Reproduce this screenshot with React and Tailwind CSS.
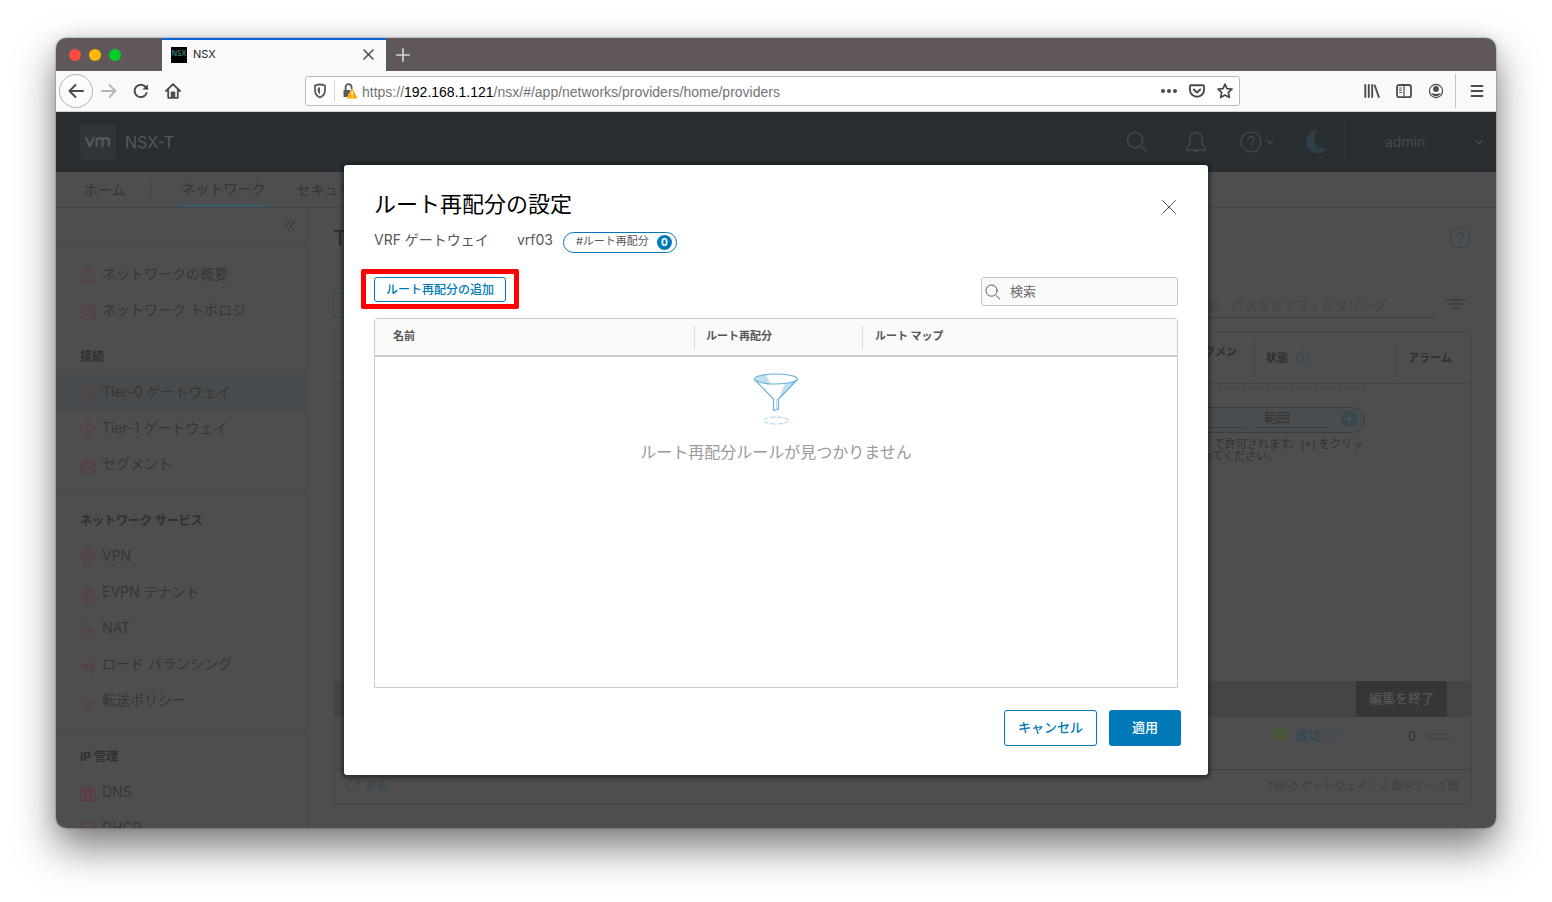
import React from "react";

const Svg = ({ s = 16, vb = "0 0 16 16", w = 1, className = "", children }) => (
  <svg
    width={s}
    height={s}
    viewBox={vb}
    fill="none"
    stroke="currentColor"
    strokeWidth={w}
    strokeLinecap="round"
    strokeLinejoin="round"
    className={"shrink-0 " + className}
    aria-hidden="true"
  >
    {children}
  </svg>
);

const MagnifierIcon = ({ s = 16, w = 1, className }) => (
  <Svg s={s} w={w} className={className}>
    <circle cx="6.6" cy="6.6" r="5.6" />
    <path d="M11.2 11.6 15 15.2" />
  </Svg>
);

const HelpIcon = ({ s = 22, w = 1.2, className }) => (
  <Svg s={s} vb="0 0 22 22" w={w} className={className}>
    <circle cx="11" cy="11" r="10" />
    <path d="M7.8 8.2c.3-1.700 1.500-2.600 3.200-2.600 1.900 0 3.300 1.100 3.300 2.700 0 2.600-3.200 2.500-3.200 5.200" />
    <path d="M11.100 16.200v.3" />
  </Svg>
);

const Chevron = ({ className }) => (
  <Svg s={8} vb="0 0 8 8" w={1.2} className={className}>
    <path d="M1 2.500 4 5.500 7 2.500" />
  </Svg>
);

const RefreshIcon = ({ s = 14, className }) => (
  <Svg s={s} vb="0 0 14 14" className={className}>
    <path d="M12.600 8A6 6 0 1 1 11.500 3.200L12.700 4.600" />
    <path d="M12.900 1v3.700H9.200" />
  </Svg>
);

/* ---------- browser chrome ---------- */

function TabStrip() {
  return (
    <div className="flex h-[33px] shrink-0 bg-[#5f5759]">
      <div className="flex w-[106px] items-center gap-2 pl-[13px]">
        <span className="size-3 rounded-full bg-[#ff4a42]" />
        <span className="size-3 rounded-full bg-[#ffb900]" />
        <span className="size-3 rounded-full bg-[#00ce26]" />
      </div>
      <div className="flex w-56 items-center border-t-2 border-[#0a63d8] bg-[#f9f9fb] pb-0.5 pl-[9px] pr-3 text-[11px] text-[#1a1a1a]">
        <span className="flex size-4 items-center justify-center bg-black text-[7px] text-[#4aa59a]">NSX</span>
        <span className="ml-1.5 flex-1">NSX</span>
        <button type="button" aria-label="タブを閉じる" className="text-[#4c4c50]">
          <Svg s={11} vb="0 0 11 11" w={1.5}>
            <path d="M1 1l9 9M10 1l-9 9" />
          </Svg>
        </button>
      </div>
      <button type="button" aria-label="新しいタブ" className="ml-2.5 self-center text-[#dad7d8]">
        <Svg s={14} vb="0 0 14 14" w={1.6}>
          <path d="M7 .8v12.400M.8 7h12.400" />
        </Svg>
      </button>
    </div>
  );
}

function Toolbar() {
  return (
    <div className="flex h-[41px] shrink-0 items-center border-b border-[#d0d2d4] bg-[#f9f9fb] text-[#4b4b4f]">
      <button
        type="button"
        aria-label="戻る"
        className="ml-[3px] flex size-[34px] items-center justify-center rounded-full border border-[#b4b4b6] bg-[#fcfcfd]"
      >
        <Svg w={2}>
          <path d="M15 8H1.500M7.500 2 1.500 8l6 6" />
        </Svg>
      </button>
      <button type="button" aria-label="進む" className="ml-2 text-[#b5b5b8]">
        <Svg w={1.8}>
          <path d="M1 8h13.500M8.500 2l6 6-6 6" />
        </Svg>
      </button>
      <button type="button" aria-label="再読み込み" className="ml-4">
        <Svg w={2}>
          <path d="M13.600 10A6.200 6.200 0 1 1 12.600 4L14.300 5.800" />
          <path d="M14.800 1.200v5.400H9.400z" fill="currentColor" stroke="none" />
        </Svg>
      </button>
      <button type="button" aria-label="ホームページ" className="ml-4">
        <Svg w={1.8}>
          <path d="M1 8 8 1.200 15 8M3.200 7v7.800h9.600V7" />
          <path d="M6.200 14V9h3.600v5" fill="currentColor" strokeWidth="1" />
        </Svg>
      </button>

      <div className="mx-[124px] flex h-[30px] min-w-0 flex-1 items-center rounded-[3px] border border-[#b9b9bc] bg-white px-1.5">
        <Svg className="text-[#5a5a5e]" w={1.8}>
          <path d="M8 1.500c1.800 0 3.600.4 5 1v4.800c0 3.500-2.200 6-5 7.200-2.800-1.200-5-3.700-5-7.200V2.500c1.400-.6 3.200-1 5-1z" />
          <path d="M8 4.200v7.300c-1.500-1-2.400-2.400-2.400-4.400V4.700z" fill="currentColor" stroke="none" />
        </Svg>
        <span className="ml-1.5 h-[22px] w-px bg-[#d7d7da]" />
        <Svg className="ml-[7px] text-[#5a5a5e]" w={1.8}>
          <path d="M3.600 7V4.300a3 3 0 0 1 6-.2v1.200" />
          <path d="M1.500 7h7.200L5.600 14H1.500z" fill="currentColor" stroke="none" />
          <path d="M10.200 6.200 15 15H5.400z" fill="#ffa800" stroke="#ffa800" strokeWidth="1" />
          <path d="M10.200 9v2.700M10.200 13.400v.1" stroke="#fff" strokeWidth="1.300" />
        </Svg>
        <p className="ml-1 flex-1 truncate pt-px font-['Liberation_Sans',sans-serif] text-sm text-[#737376]">
          https://<span className="text-black">192.168.1.121</span>/nsx/#/app/networks/providers/home/providers
        </p>
        <button type="button" aria-label="ページ操作">
          <Svg>
            <path d="M2 8h.01M8 8h.01M14 8h.01" strokeWidth="4" />
          </Svg>
        </button>
        <button type="button" aria-label="Pocket に保存" className="ml-3">
          <Svg w={1.9}>
            <path d="M2 2.200h12a1 1 0 0 1 1 1v4a7 6.500 0 0 1-14 0v-4a1 1 0 0 1 1-1z" />
            <path d="M4.800 6.500 8 9.500l3.200-3" />
          </Svg>
        </button>
        <button type="button" aria-label="ブックマーク" className="ml-3">
          <Svg w={1.700}>
            <path d="M8 1.200l2 4.500 5 .5-3.700 3.300 1 5L8 12l-4.300 2.500 1-5L1 6.200l5-.5z" />
          </Svg>
        </button>
      </div>

      <button type="button" aria-label="ライブラリ">
        <Svg w={1.9}>
          <path d="M1.300 2v12M4.800 2v12M8.200 2v12M10.800 2.500l4 11.500" />
        </Svg>
      </button>
      <button type="button" aria-label="サイドバー" className="ml-4">
        <Svg w={1.8}>
          <rect x="1" y="2" width="14" height="12.200" rx="2" />
          <path d="M8 2v12" strokeWidth="1.200" />
          <path d="M3.500 5h2M3.500 7.200h2M3.500 9.500h2" strokeWidth="1" />
        </Svg>
      </button>
      <button type="button" aria-label="アカウント" className="ml-4">
        <Svg w={1.200}>
          <circle cx="8" cy="8" r="6.600" />
          <circle cx="8" cy="6" r="2.900" fill="currentColor" stroke="none" />
          <path d="M3.200 9.600c1 1.100 2.800 1.300 4.800 1.300s3.800-.2 4.800-1.300c-.6 2.500-2.600 3.700-4.800 3.700s-4.200-1.200-4.800-3.700z" fill="currentColor" stroke="none" />
        </Svg>
      </button>
      <span className="ml-[11px] h-[34px] w-px bg-[#c6c6c9]" />
      <button type="button" aria-label="メニュー" className="ml-[13px] mr-[11px]">
        <Svg w={1.8}>
          <path d="M2.500 3h11M2.500 8h11M2.500 13h11" />
        </Svg>
      </button>
    </div>
  );
}

/* ---------- NSX page behind the dialog ---------- */

function AppHeader() {
  return (
    <header className="flex h-[60px] shrink-0 items-center bg-[#282e31] text-[#454a4d]">
      <span className="ml-6 flex size-9 items-center justify-center rounded-[3px] bg-[#2f3538] text-[#56595b]">
        <svg width="26" height="12" viewBox="0 0 26 12" fill="none" stroke="currentColor" strokeWidth="2.200" strokeLinecap="round" strokeLinejoin="round" aria-label="vmware">
          <path d="M1.200 2 4.800 10 8.800 2" />
          <path d="M11.500 10V4.500c0-3.300 6-3.300 6 0V10M17.500 4.500c0-3.300 6.500-3.300 6.500 0V10" />
        </svg>
      </span>
      <span className="ml-[9px] flex-1 text-base text-[#54585a]">NSX-T</span>
      <button type="button" aria-label="検索">
        <MagnifierIcon s={22} />
      </button>
      <button type="button" aria-label="通知" className="ml-9">
        <Svg s={24} vb="0 0 24 24" w={1.200}>
          <path d="M12 1.500v1.200M12 2.800c-4 0-6.300 2.700-6.300 6.500v5.400L2.500 18v2.200h19V18l-3.200-3.300V9.300c0-3.800-2.300-6.500-6.300-6.500zM10.500 21c.5 1 2.500 1 3 0" />
        </Svg>
      </button>
      <button type="button" aria-label="ヘルプ" className="ml-8 flex items-center gap-1">
        <HelpIcon />
        <Chevron />
      </button>
      <button type="button" aria-label="ダーク モード" className="ml-7 text-[#2f3f49]">
        <Svg s={26} vb="0 0 26 26">
          <path d="M14 1.500A11.300 11.300 0 1 0 24.500 20C15 22 8.500 12 14 1.500z" fill="currentColor" />
        </Svg>
      </button>
      <span className="ml-4 h-10 w-px bg-[#2b3134]" />
      <button type="button" className="ml-10 flex items-center text-sm">
        <span className="w-[90px] text-left">admin</span>
        <Chevron className="mr-[13px]" />
      </button>
    </header>
  );
}

function MainTabs() {
  return (
    <nav className="flex h-9 shrink-0 border-b border-[#454545] text-sm text-[#343434]">
      <a href="#home" className="flex items-center pl-7 pr-6">
        ホーム
      </a>
      <span className="my-2 w-px bg-[#494949]" />
      <a href="#network" className="ml-7 flex items-center border-b-[3px] border-[#3a5765] px-[3px] pt-0.5">
        ネットワーク
      </a>
      <a href="#security" className="ml-7 flex items-center">
        セキュリティ
      </a>
    </nav>
  );
}

const icons = {
  gauge: (
    <>
      <path d="M2 13.500A7 7 0 1 1 14 13.500zM8 9.800l3-4M8 3.200v1M3.200 8.500h1M12 8.500h1" />
      <circle cx="7.600" cy="10" r="1" fill="currentColor" />
    </>
  ),
  map: <path d="M7.500 12 5.500 11.300 1 13.500V2.200l4.500 1.500L10.500 2 15 3.700v10M5.500 3.700V11M10.500 2v4M10.500 7a2.600 2.600 0 1 0 .1 0M12.500 11.500l2.500 3.500" />,
  t0: (
    <>
      <circle cx="8" cy="8" r="6.700" />
      <circle cx="8" cy="8" r="1.900" />
      <path d="M8 2.200v2.300M8 11.500v2.300M2.400 8h1.800M11.800 8h1.800M7 3.500l1 1 1-1M7 12.500l1-1 1 1" />
    </>
  ),
  t1: (
    <>
      <circle cx="8" cy="8" r="6.700" />
      <path d="M7.200 6.600l.9-.6v4.200M8 2.200v2M8 11.800v2M2.400 8h2.200M11.400 8h2.200M7 3.200l1 1 1-1M7 12.800l1-1 1 1" />
    </>
  ),
  segment: (
    <>
      <rect x="1.300" y="5.500" width="13.400" height="9" rx="1" />
      <path d="M2.200 3.500h11.600M3.200 1.500h9.600M4 8.500h7M5.500 7.300 4 8.500l1.500 1.200M12 11.500H5M10.500 10.300l1.500 1.200-1.500 1.200" />
    </>
  ),
  vpn: (
    <>
      <circle cx="8" cy="7.200" r="6.500" />
      <path d="M5.300 6.500h5.400v4H5.300zM6.300 6.500V5a1.700 1.700 0 0 1 3.400 0v1.500M3.500 15.500h9M8 8v1" />
    </>
  ),
  evpn: (
    <>
      <circle cx="8" cy="7.500" r="5.900" />
      <path d="M4 3.500c1 4 4 7 8.500 8M12 3.500C11 7 8 10.500 3.800 11.500M6 2c2 1 5 2 6 2M2.500 6.500C4 6 6 6.500 8 8.200M4.500 15.300h7.500" />
    </>
  ),
  nat: <path d="M1 1.500h.5M4 1.500h5v13H4M1 8h.5M4 8h11M13 6l2 2-2 2M1 14.500h.5" />,
  lb: (
    <>
      <circle cx="3.200" cy="8" r="2" />
      <circle cx="12.800" cy="2.800" r="1.700" />
      <circle cx="12.800" cy="8" r="1.700" />
      <circle cx="12.800" cy="13.200" r="1.700" />
      <path d="M5.500 7l5.200-3.300M5.500 8h5M5.500 9l5.200 3.300" />
    </>
  ),
  forward: <path d="M11.500 4.500 8.500 1.500 2 8l6.500 6.500 3-3M8.500 5v6M8.500 8h7M13.300 5.800 15.500 8l-2.200 2.200" />,
  dns: (
    <>
      <path d="M.8 1.500h14.400v13H.8zM.8 5.800h14.400M.8 10.200h14.400M5 1.500v13M11 1.500v13" />
      <path d="M5 1.500h6v13H5z" fill="currentColor" fillOpacity=".6" />
    </>
  ),
  dhcp: <path d="M2.300 1.500h11.400a1.500 1.500 0 0 1 1.500 1.500v10H.8V3a1.500 1.500 0 0 1 1.500-1.500zM.8 5.500h14.400" />,
};

const groups = [
  { items: [["gauge", "ネットワークの概要"], ["map", "ネットワーク トポロジ"]] },
  { title: "接続", items: [["t0", "Tier-0 ゲートウェイ"], ["t1", "Tier-1 ゲートウェイ"], ["segment", "セグメント"]], line: true },
  {
    title: "ネットワーク サービス",
    items: [["vpn", "VPN"], ["evpn", "EVPN テナント"], ["nat", "NAT"], ["lb", "ロード バランシング"], ["forward", "転送ポリシー"]],
    line: true,
  },
  { title: "IP 管理", items: [["dns", "DNS"], ["dhcp", "DHCP"]] },
];

function Sidebar() {
  return (
    <aside className="w-[252px] shrink-0 overflow-hidden border-r border-[#494949]">
      <div className="flex h-[37px] items-center justify-end border-b border-[#494949] pr-[11px] text-[#303030]">
        <button type="button" aria-label="サイドバーを折りたたむ">
          <Svg s={12} vb="0 0 12 12">
            <path d="M6 1 1 6l5 5M11 1 6 6l5 5" />
          </Svg>
        </button>
      </div>
      <div className="pt-0.5">
        {groups.map((g, i) => (
          <section key={i} className={g.line ? "border-b border-[#494949] pb-[9px] pt-2.5" : "pt-2.5"}>
            {g.title && <h2 className="flex h-9 items-center pl-6 text-xs font-bold text-[#303030]">{g.title}</h2>}
            <ul>
              {g.items.map(([icon, label]) => (
                <li key={label}>
                  <a
                    href={"#" + icon}
                    className={
                      "flex h-9 items-center gap-1.5 pb-0.5 pl-6 text-sm text-[#363636] " + (icon === "t0" ? "bg-[#484b4d]" : "")
                    }
                  >
                    <Svg className="mt-1 text-[#5c3b44]">{icons[icon]}</Svg>
                    {label}
                  </a>
                </li>
              ))}
            </ul>
          </section>
        ))}
      </div>
    </aside>
  );
}

const DashedRule = () => (
  <svg width="234" height="2" className="ml-auto mr-6 block text-[#484848]" aria-hidden="true">
    <path d="M0 .5h234" stroke="currentColor" strokeDasharray="3 3" />
  </svg>
);

function GatewayTable() {
  return (
    <div className="mt-3.5 rounded-[3px] border border-[#464646]">
      <table className="w-full table-fixed border-collapse text-left text-[11px] text-[#2f2f2f]">
        <thead>
          <tr className="h-[50px] border-b border-[#464646] font-bold">
            <th scope="col" aria-label="名前" />
            <th scope="col" className="w-[130px] pb-3 pr-4 text-right">
              <span className="whitespace-nowrap">セグメン</span>
            </th>
            <th scope="col" className="w-[142px] p-0">
              <div className="flex h-[38px] items-center gap-2 border-l border-[#484848] pl-3">
                状態
                <Svg s={14} vb="0 0 14 14" className="text-[#304a58]">
                  <circle cx="7" cy="7" r="6.400" />
                  <path d="M6 6h1.200v4.200M5.800 10.300h2.800M7 3.700v.2" />
                </Svg>
              </div>
            </th>
            <th scope="col" className="w-[76px] p-0">
              <div className="flex h-[38px] items-center border-l border-[#484848] pl-3">アラーム</div>
            </th>
          </tr>
        </thead>
        <tbody>
          <tr>
            <td colSpan={4} className="h-[298px] p-0 align-top">
              <div className="flex flex-col items-end">
                <svg width="152" height="2" className="mr-[106px] mt-[3px] block text-[#424242]" aria-hidden="true">
                  <path d="M0 1h152" stroke="currentColor" strokeWidth="2" strokeDasharray="2 4" />
                </svg>
                <div className="mr-[106px] mt-[18px] flex h-[26px] w-[300px] items-center justify-end gap-2.5 rounded-full border border-[#363e42] bg-[#4a4d4f] pb-0.5 pr-[7px]">
                  <input aria-label="サブネット" className="h-[18px] w-[90px] border-b border-[#3c3c3c]" />
                  <input
                    aria-label="範囲"
                    placeholder="範囲"
                    className="h-[18px] w-[73px] border-b border-[#3c3c3c] pl-2 text-[13px] placeholder:text-[#353535]"
                  />
                  <button type="button" aria-label="追加" className="ml-0.5 text-[#36474f]">
                    <svg width="16" height="16" viewBox="0 0 16 16" aria-hidden="true">
                      <circle cx="8" cy="8" r="8" fill="currentColor" />
                      <path d="M8 3.500v9M3.500 8h9" stroke="#4d5255" strokeWidth="1.500" />
                    </svg>
                  </button>
                </div>
                <p className="mr-[108px] mt-[5px] whitespace-nowrap text-right text-[11px] leading-3 text-[#323232]">
                  で許可されます。(+) をクリッ
                </p>
                <p className="mr-[193px] whitespace-nowrap text-[11px] leading-3 text-[#323232]">ってください。</p>
              </div>
              <div className="mt-[34px] flex flex-col gap-8">
                <DashedRule />
                <DashedRule />
                <DashedRule />
                <DashedRule />
              </div>
            </td>
          </tr>
          <tr className="bg-[#454545]">
            <td colSpan={4} className="h-9 p-0 pr-6 text-right">
              <button type="button" className="h-9 rounded-[3px] bg-[#363636] px-[13px] text-[13px] font-medium text-[#555555]">
                編集を終了
              </button>
            </td>
          </tr>
          <tr className="h-[52px] border-b border-[#404040] align-top">
            <td />
            <td />
            <td className="p-0 pl-5 pt-2">
              <span className="flex items-center text-[13px] leading-5 text-[#2c4a5b]">
                <span className="mr-2 size-3.5 rounded-full bg-[#475735]" />
                <span className="font-medium">成功</span>
                <RefreshIcon className="ml-1 text-[#35505e]" />
              </span>
            </td>
            <td className="p-0 pl-[13px] pt-[9px]">
              <span className="flex items-center gap-2.5 text-[13px] leading-5">
                0
                <span className="h-[5px] w-6 rounded-full border border-[#424242]" />
              </span>
            </td>
          </tr>
        </tbody>
      </table>
      <div className="flex h-[33px] items-center justify-between pl-3 pr-3 text-[11px] text-[#404040]">
        <button type="button" className="flex items-center gap-1.5 text-[#3a474e]">
          <RefreshIcon />
          更新
        </button>
        <span>Tier-0 ゲートウェイ： 3 個中 1 ～ 3 個</span>
      </div>
    </div>
  );
}

function Gateways() {
  return (
    <main className="min-w-0 flex-1 pl-[25px] pr-6 pt-3.5">
      <div className="flex h-8 items-center justify-between pr-px text-[#2b2b2b]">
        <h1 className="text-[22px]">Tier-0 ゲートウェイ</h1>
        <a href="#help" aria-label="ヘルプ" className="text-[#2f4957]">
          <HelpIcon />
        </a>
      </div>
      <div className="mt-[38px] flex h-[26px] items-center">
        <button type="button" aria-label="ゲートウェイの追加" className="h-[25px] w-36 rounded-[3px] border border-[#2e4958]" />
        <input
          type="text"
          aria-label="フィルタリング"
          placeholder="名前、パスなどでフィルタリング"
          className="ml-auto h-[26px] w-[244px] border-b border-[#404040] text-[13px] placeholder:text-[#444444]"
        />
        <button type="button" aria-label="フィルタ" className="ml-2.5 mr-1.5 text-[#3c3c3c]">
          <Svg s={20} vb="0 0 20 20" w={1.600}>
            <path d="M1 5h18M4 9h12M7 13h6" />
          </Svg>
        </button>
      </div>
      <GatewayTable />
    </main>
  );
}

/* ---------- dialog ---------- */

function RedistributionDialog() {
  return (
    <div
      role="dialog"
      aria-modal="true"
      aria-labelledby="dialog-title"
      className="w-[864px] rounded-[3px] bg-white pb-[29px] pl-[30px] pr-[27px] pt-[23px] shadow-[0_1px_4px_2px_rgba(0,0,0,0.45)]"
    >
      <div className="flex h-8 items-center justify-between pr-[5px]">
        <h2 id="dialog-title" className="text-[22px] text-black">
          ルート再配分の設定
        </h2>
        <button type="button" aria-label="閉じる" className="pt-1.5 text-[#565656]">
          <Svg s={14} vb="0 0 14 14">
            <path d="M.5.5l13 13M13.500.5l-13 13" />
          </Svg>
        </button>
      </div>

      <div className="mt-2 flex h-6 items-center text-sm text-[#565656]">
        <span>VRF ゲートウェイ</span>
        <span className="ml-7">vrf03</span>
        <span className="ml-2.5 mt-1 flex h-[21px] items-center gap-2 rounded-full border border-[#0079b8] pl-3 pr-1 text-[11px]">
          #ルート再配分
          <span className="flex size-[15px] items-center justify-center rounded-full bg-[#0079b8] text-[10px] font-bold text-white">
            0
          </span>
        </span>
      </div>

      <div className="mr-[3px] mt-[25px] flex items-start justify-between">
        <div className="relative">
          <button
            type="button"
            className="flex h-[25px] items-center rounded-[3px] border border-[#0079b8] px-[11px] text-xs font-medium text-[#0079b8]"
          >
            ルート再配分の追加
          </button>
          <span className="pointer-events-none absolute -bottom-[7px] -left-[13px] -right-[13px] -top-2 rounded-[2px] border-[5px] border-[#ff0000]" />
        </div>
        <label className="flex h-[29px] w-[197px] items-center gap-[9px] rounded-[3px] border border-[#c4c4c4] bg-[#fafafa] px-[3px] text-[#565656]">
          <MagnifierIcon />
          <input
            type="text"
            aria-label="検索"
            placeholder="検索"
            className="w-full min-w-0 bg-transparent text-[13px] outline-none placeholder:text-[#6a6a6a]"
          />
        </label>
      </div>

      <div className="mr-[3px] mt-3 min-h-[370px] rounded-t-[3px] border border-[#cccccc]">
        <table className="w-full table-fixed text-left text-[11px] text-[#565656]">
          <thead>
            <tr className="h-[37px] bg-[#fafafa]">
              <th scope="col" className="w-[319px] border-b-2 border-[#cccccc] p-0 pb-0.5 pl-[18px] font-bold">
                名前
              </th>
              <th scope="col" className="w-[168px] border-b-2 border-[#cccccc] p-0">
                <div className="flex h-[25px] items-center border-l border-[#dddddd] pb-0.5 pl-[11px] font-bold">ルート再配分</div>
              </th>
              <th scope="col" className="border-b-2 border-[#cccccc] p-0">
                <div className="flex h-[25px] items-center border-l border-[#dddddd] pb-0.5 pl-3 font-bold">ルート マップ</div>
              </th>
            </tr>
          </thead>
          <tbody>
            <tr>
              <td colSpan={3} className="p-0 pt-4">
                <div className="flex flex-col items-center gap-[15px]">
                  <svg width="46" height="52" viewBox="0 0 46 52" fill="none" stroke="#6ab2d8" aria-hidden="true">
                    <path d="M2 6.500C4 3.500 8 2.500 13 1.800l4 8.500C10 10 3 9 2 6.500z" fill="#c0deee" stroke="none" />
                    <path d="M32 10.500 43.500 7 25.500 26.500z" fill="#c0deee" stroke="none" />
                    <ellipse cx="23" cy="6" rx="21.500" ry="5" strokeWidth="1.200" />
                    <path d="M1.500 6.500 20.500 26v11.500l5-1.500V26L44.500 6.500" strokeWidth="1.200" />
                    <path d="M23.800 26v10.500" stroke="#a9d2e8" strokeWidth="1" />
                    <ellipse cx="23" cy="47.500" rx="12.500" ry="3.500" stroke="#a9d2e8" strokeDasharray="5 2" />
                  </svg>
                  <span className="text-base text-[#9a9a9a]">ルート再配分ルールが見つかりません</span>
                </div>
              </td>
            </tr>
          </tbody>
        </table>
      </div>

      <div className="mt-[22px] flex justify-end gap-3 text-[13px] font-medium">
        <button type="button" className="h-9 w-[93px] rounded-[3px] border border-[#0079b8] text-[#0079b8]">
          キャンセル
        </button>
        <button type="button" className="h-9 w-[72px] rounded-[3px] bg-[#0079b8] text-white">
          適用
        </button>
      </div>
    </div>
  );
}

export default function App() {
  return (
    <div className="flex h-screen flex-col bg-white px-14 pb-[74px] pt-[38px] font-['Inter','Noto_Sans_CJK_JP',sans-serif]">
      <div className="flex min-h-0 flex-1 flex-col overflow-hidden rounded-[10px] shadow-[0_20px_40px_rgba(0,0,0,0.5),0_0_20px_rgba(0,0,0,0.1),0_0_2px_rgba(0,0,0,0.5)]">
        <TabStrip />
        <Toolbar />
        <div className="relative flex min-h-0 flex-1 flex-col bg-[#4e4e4e]">
          <AppHeader />
          <MainTabs />
          <div className="flex min-h-0 flex-1">
            <Sidebar />
            <Gateways />
          </div>
          <div className="absolute inset-0 flex items-center justify-center">
            <RedistributionDialog />
          </div>
        </div>
      </div>
    </div>
  );
}
